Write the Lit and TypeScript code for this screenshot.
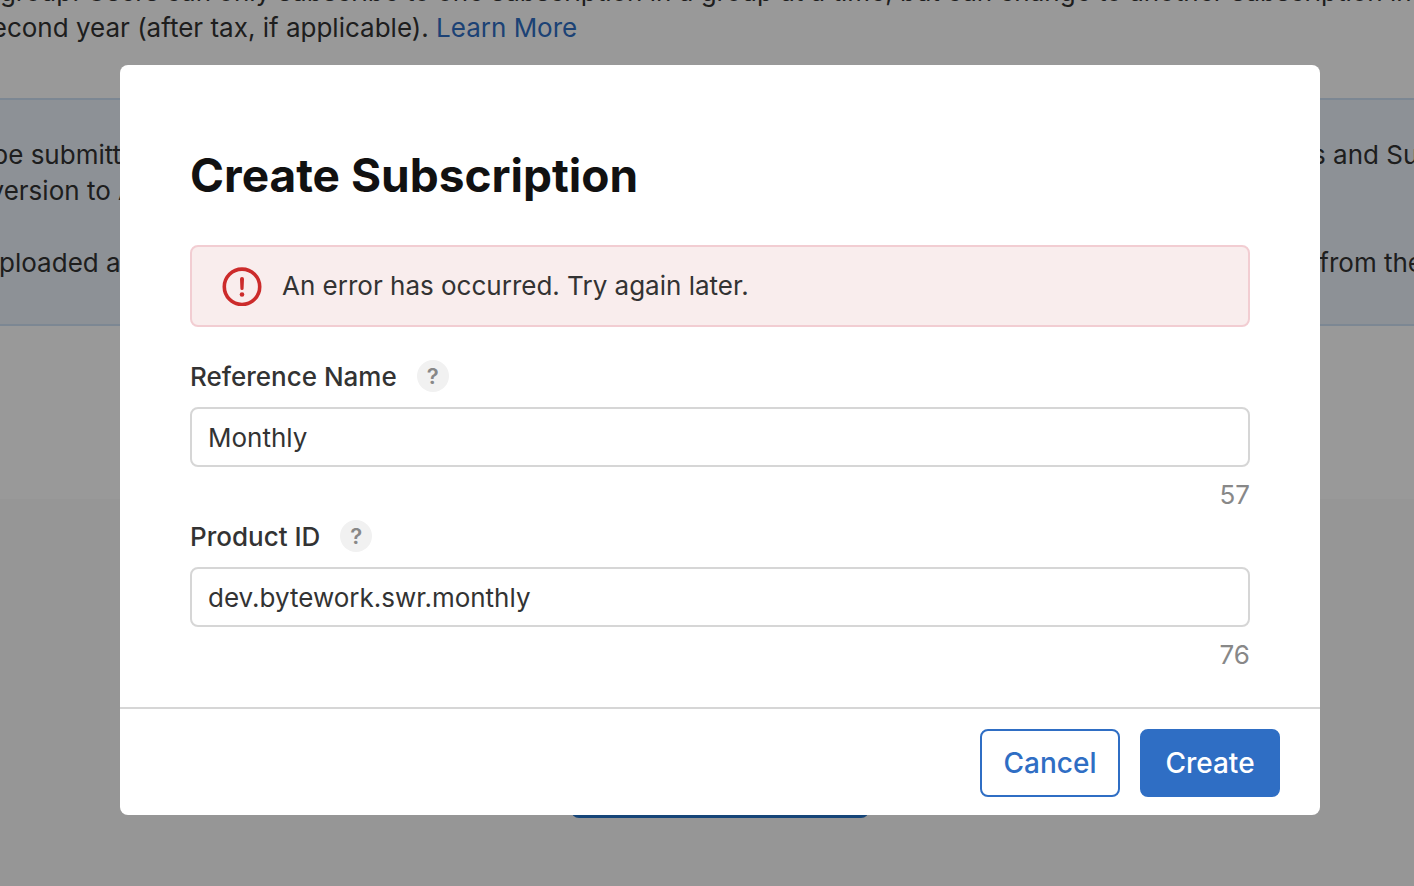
import { LitElement, html, css } from "lit";
import { customElement, property } from "lit/decorators.js";

const base = css`
  *, *::before, *::after { box-sizing: border-box; }
  button, input { font: inherit; }
  p, h1 { margin: 0; }
`;

@customElement("form-field")
class FormField extends LitElement {
  @property() label = "";
  @property() value = "";
  @property({ type: Number }) max = 0;

  static styles = [base, css`
    :host { display: block; }
    .head { display: flex; align-items: center; gap: 20px; height: 40px; }
    .label { font-weight: 500; line-height: 36px; }
    .help {
      width: 32px; height: 32px; padding: 0; border: 0; border-radius: 50%;
      margin-bottom: 2px; background: #f1f1f1; color: #888;
      font-size: 22px; line-height: 32px; font-weight: 600; text-align: center;
    }
    .input {
      display: block; width: 100%; height: 60px; margin: 10px 0;
      padding: 0 16px; border: 2px solid #d6d6d6; border-radius: 8px;
      background: #fff; color: #333; outline: none;
    }
    .count { display: block; text-align: right; line-height: 36px; color: #888; }
  `];

  render() {
    return html`
      <div class="head">
        <label class="label" for="field">${this.label}</label>
        <button class="help" type="button">?</button>
      </div>
      <input class="input" id="field" type="text" .value=${this.value}
        @input=${(e: Event) => { this.value = (e.target as HTMLInputElement).value; }}>
      <output class="count" for="field">${this.max - this.value.length}</output>
    `;
  }
}

@customElement("app-root")
class AppRoot extends LitElement {
  static styles = [base, css`
    :host {
      display: grid; height: 100vh; overflow: hidden;
      font-family: Inter, "Liberation Sans", sans-serif;
      font-size: 26px; line-height: 36px; color: #333;
    }
    .page, .scrim { grid-area: 1 / 1; min-width: 0; min-height: 0; }
    .page { background: #fafafa; overflow: hidden; white-space: nowrap; }
    .section { background: #fff; padding-bottom: 173px; }
    .intro { margin: -26px 0 0 -22px; padding-bottom: 52px; }
    .link { color: #2f6ec4; text-decoration: none; }
    .note {
      padding: 37px 0 43px; background: #ebf2fa;
      border: solid #cfe1f5; border-width: 2px 0;
    }
    .row { display: flex; justify-content: space-between; min-height: 36px; }
    .start { display: flex; justify-content: flex-end; width: 136px; }
    .end { width: 102px; }
    .more {
      display: block; width: 298px; height: 68px; margin: 251px auto 0;
      border: 0; border-radius: 8px; background: #2673c8;
    }
    .center { padding-left: 26px; }
    .scrim { background: rgba(0, 0, 0, 0.4); padding: 65px 94px 65px 120px; }
    .modal { background: #fff; border-radius: 8px; }
    .body { padding: 80px 70px 34px; }
    .title { font-size: 46px; line-height: 60px; font-weight: 700; color: #111; }
    .alert {
      display: flex; align-items: center; gap: 20px;
      margin: 40px 0 30px; padding: 20px 30px; height: 82px;
      background: #f9eded; border: 2px solid #f2cdd2; border-radius: 8px;
    }
    .icon { display: block; width: 40px; height: 40px; }
    .fields { display: grid; gap: 4px; }
    .footer {
      display: flex; justify-content: flex-end; gap: 20px;
      padding: 20px 40px 18px; border-top: 2px solid #d6d6d6;
    }
    .btn {
      width: 140px; height: 68px; padding: 0; border: 2px solid #2f6ec4;
      border-radius: 8px; background: #fff; color: #2f6ec4;
      font-size: 28px; font-weight: 500;
    }
    .primary { background: #2f6ec4; color: #fff; }
  `];

  render() {
    return html`
      <div class="page">
        <div class="section">
          <p class="intro">
            a group. Users can only subscribe to one subscription in a group at a time, but can change to another subscription in the<br>
            second year (after tax, if applicable). <a class="link" href="#">Learn More</a>
          </p>
          <div class="note">
            <div class="row"><span class="start">be submitte</span><span class="end">s and Sub</span></div>
            <div class="row"><span class="start">version to A</span></div>
            <div class="row"></div>
            <div class="row"><span class="start">uploaded an</span><span class="end">&nbsp;from the</span></div>
          </div>
        </div>
        <div class="center"><button class="more" type="button" aria-label="Create"></button></div>
      </div>
      <div class="scrim">
        <div class="modal" role="dialog" aria-modal="true" aria-labelledby="title">
          <div class="body">
            <h1 class="title" id="title">Create Subscription</h1>
            <div class="alert" role="alert">
              <svg class="icon" viewBox="0 0 40 40" fill="none" aria-hidden="true">
                <circle cx="20" cy="20.8" r="17.7" stroke="#cc2b2b" stroke-width="3.6"/>
                <path d="M18 13.1a2 2 0 0 1 4 0l-.4 9.4a1.6 1.6 0 0 1-3.2 0z" fill="#cc2b2b"/>
                <circle cx="20" cy="28.5" r="2.3" fill="#cc2b2b"/>
              </svg>
              <span>An error has occurred. Try again later.</span>
            </div>
            <div class="fields">
              <form-field label="Reference Name" value="Monthly" max="64"></form-field>
              <form-field label="Product ID" value="dev.bytework.swr.monthly" max="100"></form-field>
            </div>
          </div>
          <div class="footer">
            <button class="btn" type="button">Cancel</button>
            <button class="btn primary" type="button">Create</button>
          </div>
        </div>
      </div>
    `;
  }
}
